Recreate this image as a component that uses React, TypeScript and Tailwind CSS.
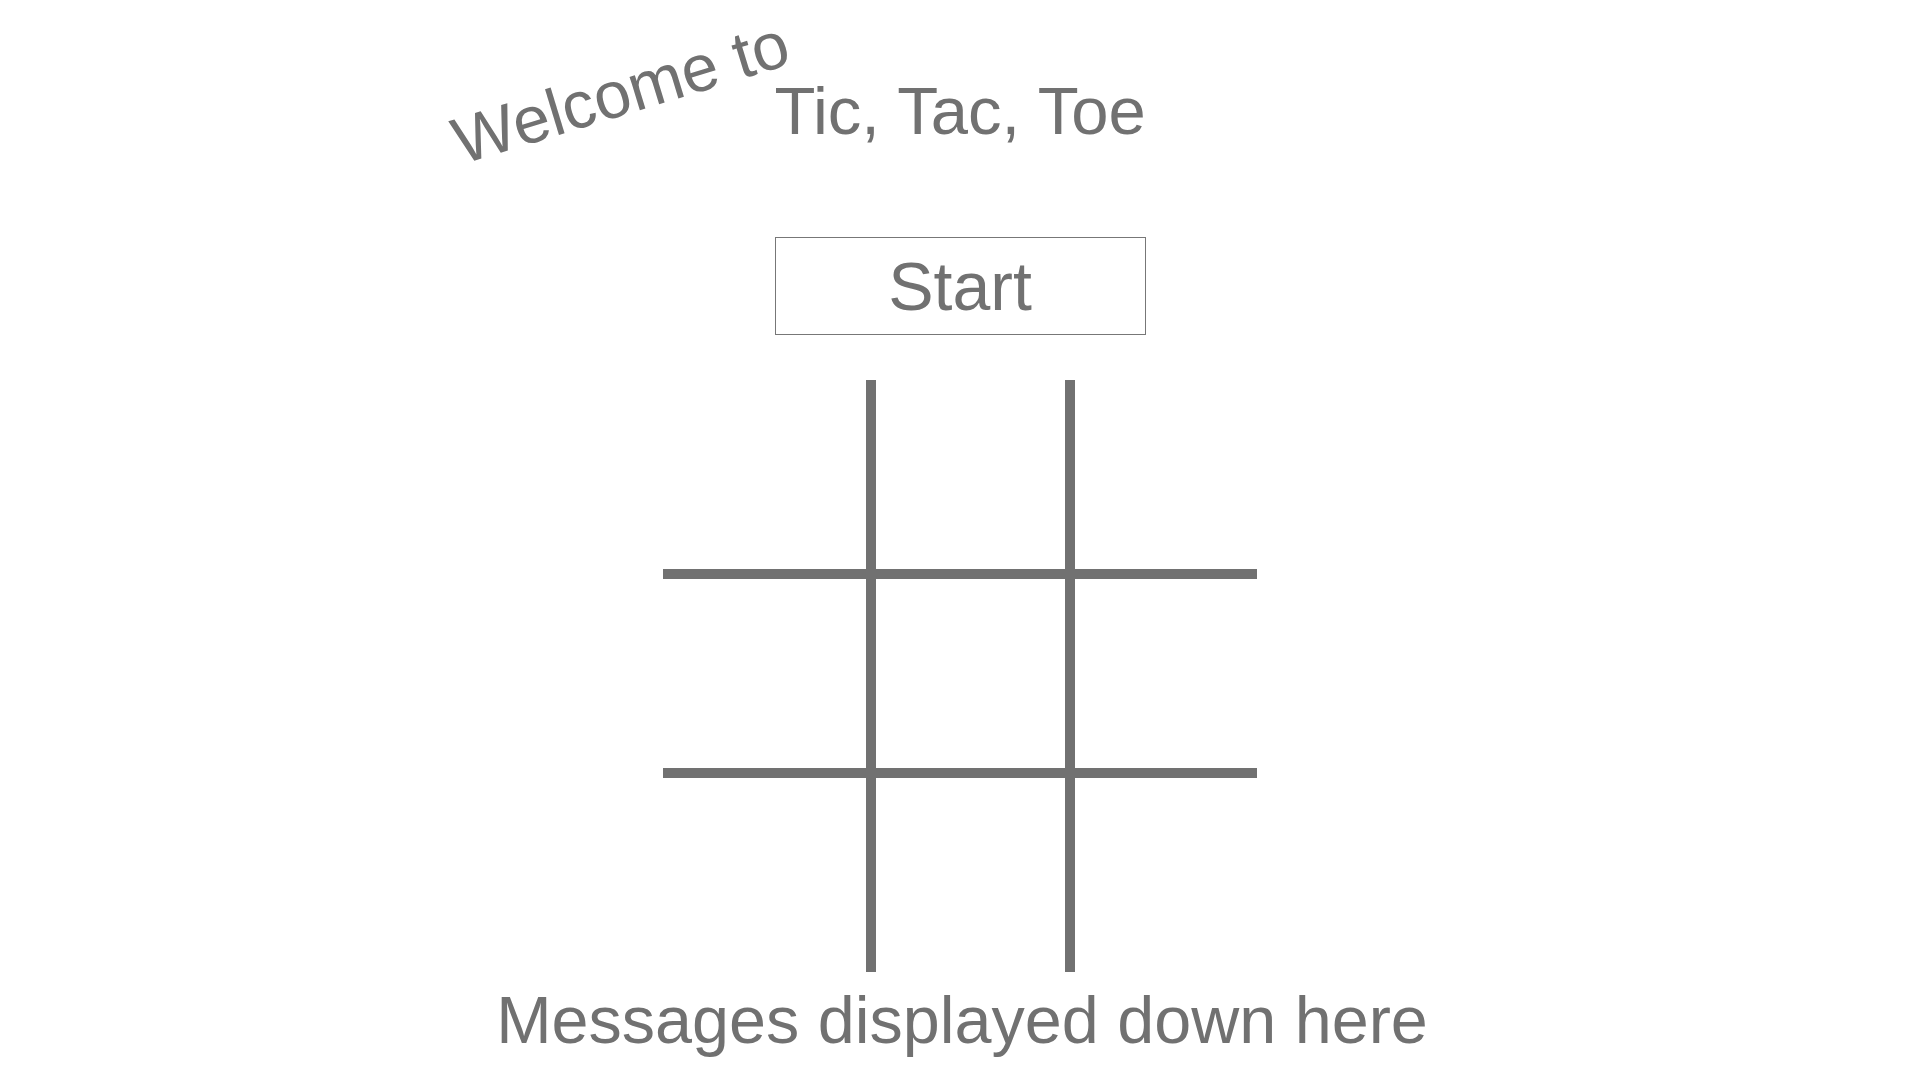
import React from "react";

function Board() {
  // tic tac toe board lines
  return (
    <svg width="594" height="592" viewBox="0 0 594 592" className="block">
      <rect x="203" y="0" width="10" height="592" fill="#717171" />
      <rect x="402" y="0" width="10" height="592" fill="#717171" />
      <rect x="0" y="189" width="594" height="10" fill="#717171" />
      <rect x="0" y="388" width="594" height="10" fill="#717171" />
    </svg>
  );
}

export default function App() {
  return (
    <div
      className="flex min-h-screen w-full flex-col items-center bg-white text-[#717171]"
      style={{ fontFamily: '"Liberation Sans", Arial, Helvetica, sans-serif' }}
    >
      <div className="relative mt-[77px] w-[371px]">
        <span className="absolute left-[-328px] top-[-18px] -rotate-[17deg] whitespace-nowrap text-[66px] leading-none">
          Welcome to
        </span>
        <h1 className="whitespace-nowrap text-[67px] font-normal leading-none">Tic, Tac, Toe</h1>
      </div>

      <button
        type="button"
        className="mt-[93px] flex h-[98px] w-[371px] items-center justify-center border border-[#777777] bg-white text-[68px] leading-none text-[#717171]"
      >
        Start
      </button>

      <div className="mt-[45px]">
        <Board />
      </div>

      <p className="ml-[4px] mt-[15px] whitespace-nowrap text-[66.5px] leading-none">Messages displayed down here</p>
    </div>
  );
}
